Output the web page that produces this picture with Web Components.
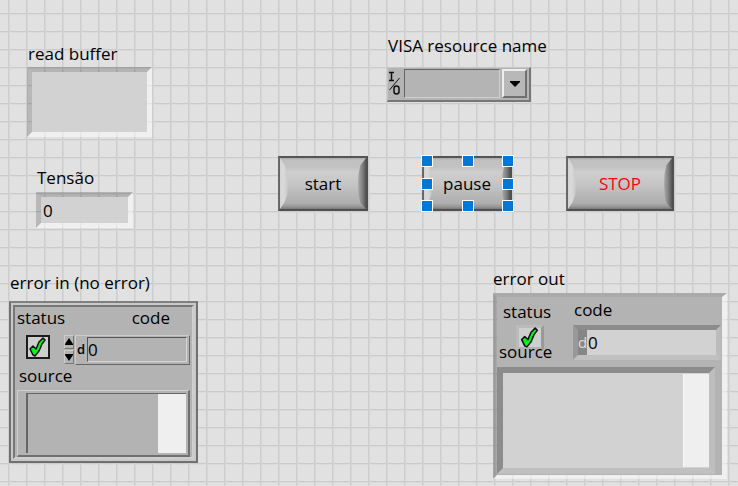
<!DOCTYPE html>
<html lang="en">
<head>
<meta charset="utf-8">
<title>Front panel</title>
<style>
html, body { margin: 0; min-height: 100%; }
body { font: 17px/22px "Open Sans", "Noto Sans", sans-serif; color: #000; }
</style>
</head>
<body>
<front-panel>
  <string-indicator caption="read buffer" style="left:27px;top:43px"></string-indicator>
  <numeric-indicator caption="Tensão" value="0" style="left:36px;top:167px"></numeric-indicator>
  <visa-control caption="VISA resource name" style="left:387px;top:35px"></visa-control>
  <panel-button style="left:278px;top:156px">start</panel-button>
  <panel-button selected style="left:422px;top:156px">pause</panel-button>
  <panel-button class="wide" style="left:566px;top:156px;color:#ff0010">STOP</panel-button>
  <error-in caption="error in (no error)" style="left:9px;top:272px"></error-in>
  <error-out caption="error out" style="left:493px;top:268px"></error-out>
</front-panel>
<script>
const base = `
  *, *::before, *::after { box-sizing: border-box; }
  :host { display: block; }
  input, textarea, select, button { font: inherit; color: inherit; margin: 0; padding: 0; border: 0; border-radius: 0; outline: 0; background: none; appearance: none; display: block; min-width: 0; }
  textarea { resize: none; overflow: hidden; }
  label { display: block; white-space: nowrap; }
`;
const define = (name, build) => customElements.define(name, class extends HTMLElement {
  constructor() {
    super();
    const t = document.createElement('template');
    t.innerHTML = build(this);
    this.attachShadow({ mode: 'open' }).append(t.content.cloneNode(true));
  }
});

define('front-panel', () => `<style>${base}
  :host { position: relative; min-height: 100vh; overflow: hidden;
    background:
      linear-gradient(90deg, #cecece 1px, #d6d6d6 1px 2px, transparent 2px) 8px 0 / 18px 18px,
      linear-gradient(#cbcbcb 1px, #dadada 1px 2px, transparent 2px) 0 13px / 18px 18px,
      #e1e1e1; }
  ::slotted(*) { position: absolute; }
</style><slot></slot>`);

define('sunken-frame', () => `<style>${base}
  :host { border: 5px solid; border-color: rgba(0,0,0,.2) rgba(255,255,255,.5) rgba(255,255,255,.5) rgba(0,0,0,.18);
    background: #d2d2d2 padding-box; }
</style><slot></slot>`);

define('string-indicator', h => `<style>${base}
  label { padding-left: 1px; }
  sunken-frame { width: 125px; margin-top: 2px; }
  textarea { width: 100%; height: 60px; }
</style>
<label for="f">${h.getAttribute('caption')}</label>
<sunken-frame><textarea id="f" readonly></textarea></sunken-frame>`);

define('numeric-indicator', h => `<style>${base}
  label { padding-left: 1px; }
  sunken-frame { width: 97px; margin-top: 3px; }
  input { width: 100%; height: 26px; padding-left: 2px; }
</style>
<label for="f">${h.getAttribute('caption')}</label>
<sunken-frame><input id="f" readonly value="${h.getAttribute('value')}"></sunken-frame>`);

define('visa-control', h => `<style>${base}
  label { padding-left: 1px; }
  .box { display: grid; grid-template-columns: 14px 1fr; gap: 1px; width: 144px; height: 35px; margin-top: 10px; padding: 1px 2px 2px 1px;
    background: #b4b4b4; border: solid; border-width: 1px 2px 2px 1px; border-color: #c4c4c4 #777 #777 #c4c4c4; }
  .box > svg { width: 14px; height: 28px; }
  .pick { display: grid; grid-template-columns: 1fr 25px; gap: 2px; }
  select { grid-area: 1 / 1; border: 1px solid; border-color: #666 #d0d0d0 #d0d0d0 #666; padding-left: 4px; }
  .drop { grid-area: 1 / 2; display: grid; place-items: center; border: solid; border-width: 2px; border-color: #eee #707070 #707070 #eee; background: #b8b8b8; pointer-events: none; }
</style>
<label for="f">${h.getAttribute('caption')}</label>
<div class="box">
  <svg viewBox="0 0 14 28" fill="none" stroke="#111" aria-hidden="true">
    <path d="M0 3.500h5M2.500 3v8M0 11.500h5" stroke-width="1.500"/><path d="M0.500 21L10.500 9"/><rect x="5" y="17" width="5" height="8" rx="2.500" stroke-width="1.500"/>
  </svg>
  <div class="pick"><select id="f"><option></option></select>
    <span class="drop"><svg width="12" height="8" viewBox="0 0 12 8" aria-hidden="true"><path d="M1 1h10v1L6 7L1 2z"/></svg></span></div>
</div>`);

define('panel-button', h => `<style>${base}
  :host { width: 90px; height: 55px; }
  :host(.wide) { width: 108px; }
  button { position: relative; width: 100%; height: 100%; border: 2px solid #505050; border-top-color: #555; border-left-color: #686868; color: inherit;
    background: linear-gradient(#a9a9a9 0, #c0c0c0 4%, #c2c2c2 18%, #cecece 27%, #c6c6c6 50%, #b3b3b3 80%, #b0b0b0 88%, #999 95%, #787878 100%); }
  button::before, button::after { content: ""; position: absolute; top: 0; bottom: 0; width: 8px; }
  button::before { left: 0; background: linear-gradient(90deg, #d4d4d4, #dadada 40%, #c9c9c9); clip-path: polygon(0 0, 60% 15%, 90% 30%, 100% 50%, 90% 72%, 60% 86%, 0 100%); }
  button::after { right: 0; background: linear-gradient(90deg, #aaa, #858585 50%, #555); clip-path: polygon(100% 0, 30% 14%, 8% 30%, 0 50%, 8% 74%, 30% 88%, 100% 100%); }
  .marks { display: none; }
  :host([selected]) .marks { display: grid; position: absolute; inset: -1px -2px -1px -1px; grid-template: repeat(3, auto) / repeat(3, auto); justify-content: space-between; align-content: space-between; pointer-events: none; }
  .marks i { width: 12px; height: 12px; border: 1px solid #fff; background: #0078d7; }
  .marks i:nth-child(5) { visibility: hidden; }
</style>
<button type="button"><slot></slot></button><span class="marks"><i></i><i></i><i></i><i></i><i></i><i></i><i></i><i></i><i></i></span>`);

define('check-light', () => `<style>${base}
  :host { display: grid; width: 24px; height: 24px; }
  input, svg { grid-area: 1 / 1; width: 100%; height: 100%; }
  input { border: solid; border-width: var(--edge, 2px); border-color: var(--tint, #1c1c1c); background: #cfcfcf; }
  svg { pointer-events: none; z-index: 1; }
</style>
<input type="checkbox" checked aria-label="status"><svg viewBox="0 0 24 24" aria-hidden="true"><path d="M4 14l3-3 3 3 3-7 4-4 2 2-3 4-3 7-4 5-2-1z" fill="#00f818" stroke="#101010" stroke-width="1.500" stroke-linejoin="round"/></svg>`);

define('error-in', h => `<style>${base}
  .title { padding-left: 1px; }
  .frame { width: 189px; height: 162px; margin-top: 7px; border: 2px solid #707070; padding: 2px; background: #c8c8c8; border-top-color: #808080; }
  .body { height: 100%; display: flex; flex-direction: column; background: #b3b3b3; border: 2px solid; border-color: #777 #cfcfcf #cfcfcf #777; padding: 0 2px; }
  .heads { display: flex; justify-content: space-between; padding: 0 20px 0 0; }
  .row { display: flex; align-items: flex-start; margin-top: 6px; padding-left: 9px; }
  .spin { display: grid; grid-template-rows: 14px 14px; gap: 1px; width: 10px; margin-left: 14px; }
  .spin button { display: grid; place-items: center; border: 1px solid; border-color: #ccc #777 #777 #ccc; }
  .num { flex: 1; display: grid; grid-template-columns: 10px 1fr; height: 30px; margin-left: 1px; border: 1px solid; border-color: #ccc #666 #666 #ccc; padding: 1px 2px 2px 1px; }
  .num span { font-size: 13px; line-height: 24px; font-weight: 600; }
  .num input { border: 1px solid; border-color: #555 #d4d4d4 #d4d4d4 #555; height: 25px; width: 100%; }
  .src { padding-left: 2px; }
  .text { flex: 1; display: grid; grid-template-columns: 1fr 28px; margin-top: 3px; border: solid; border-width: 1px 2px 2px 1px; border-color: #d0d0d0 #707070 #707070 #d0d0d0; padding: 2px 2px 2px 8px; }
  textarea { width: 100%; height: 100%; border: solid #666; border-width: 1px 0 0 2px; }
  .bar { background: #efefef; border: solid #666; border-width: 1px 0 0; }
</style>
<div class="title">${h.getAttribute('caption')}</div>
<div class="frame"><div class="body">
  <div class="heads"><span>status</span><label for="c">code</label></div>
  <div class="row"><check-light></check-light>
    <div class="spin"><button type="button" aria-label="Increase"><svg width="8" height="8" viewBox="0 0 8 8"><path d="M4 0l4 6v1H0V6z"/></svg></button><button type="button" aria-label="Decrease"><svg width="8" height="8" viewBox="0 0 8 8"><path d="M4 8L0 2V1h8v1z"/></svg></button></div>
    <div class="num"><span>d</span><input id="c" value="0"></div></div>
  <label class="src" for="s">source</label>
  <div class="text"><textarea id="s"></textarea><div class="bar"></div></div>
</div></div>`);

define('error-out', h => `<style>${base}
  .frame { width: 234px; margin-top: 3px; border: solid; border-width: 4px 5px 4px 4px; border-color: #aaa rgba(255,255,255,.5) rgba(255,255,255,.5) rgba(0,0,0,.25); background: #b3b3b3 padding-box; padding: 2px 1px 1px 0; }
  .top { display: grid; grid-template-columns: 76px 1fr; }
  .state { padding-left: 6px; padding-top: 2px; }
  .top label { padding-left: 1px; }
  check-light { width: 28px; height: 25px; margin: 2px 0 0 13px; --edge: 3px; --tint: #bbb #999 #b3b3b3 #bbb; }
  .num { display: grid; grid-template-columns: 9px 1fr; height: 35px; margin-top: 4px; border: 5px solid; border-color: #8c8c8c #bcbcbc #c0c0c0 #999; background: #d2d2d2; }
  .num span { background: #868686; color: #ddd; font-size: 15px; line-height: 25px; }
  .num input { width: 100%; height: 25px; padding-left: 1px; }
  .src { position: relative; z-index: 2; width: max-content; margin-top: -19px; padding-left: 2px; }
  .text { width: 218px; height: 107px; margin-top: 4px; display: grid; grid-template-columns: 1fr 26px; border: 6px solid; border-color: #8c8c8c #bebebe #c0c0c0 #8c8c8c; background: #d2d2d2; }
  textarea { width: 100%; height: 100%; }
  .bar { background: #efefef; border: solid #fafafa; border-width: 0 0 0 1px; margin: 1px 0; }
</style>
<div>${h.getAttribute('caption')}</div>
<div class="frame">
  <div class="top"><div class="state"><span>status</span><check-light></check-light></div>
  <div><label for="c">code</label><div class="num"><span>d</span><input id="c" readonly value="0"></div></div></div>
  <label class="src" for="s">source</label>
  <div class="text"><textarea id="s" readonly></textarea><div class="bar"></div></div>
</div>`);
</script>
</body>
</html>
